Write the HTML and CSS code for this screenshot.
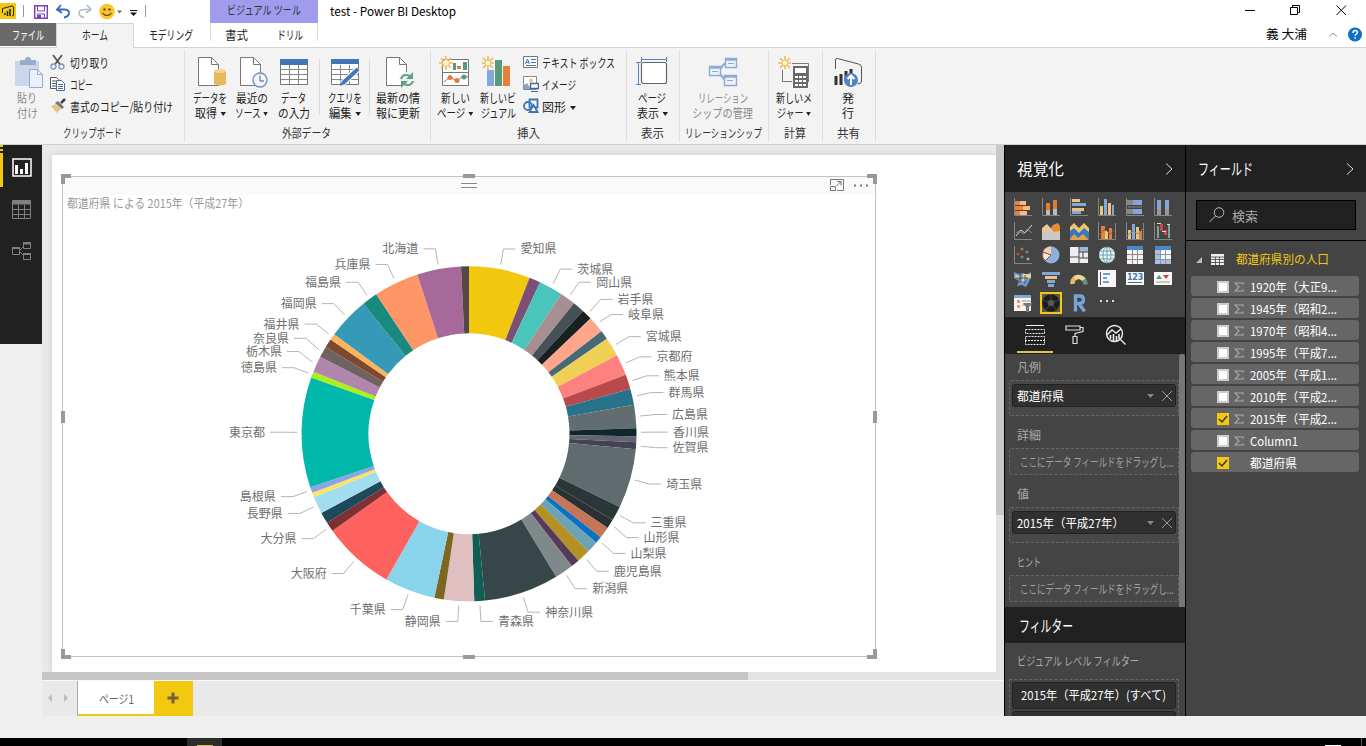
FILE: index.html
```html
<!DOCTYPE html>
<html lang="ja">
<head>
  <meta charset="UTF-8" />
  <title>test - Power BI Desktop</title>
  <link rel="stylesheet" href="styles.css">
</head>
<body>
  <div class="titlebar">
    <svg class="quick" width="150" height="23" viewBox="0 0 150 23" fill="none">
      <rect x="0" y="3" width="16" height="16" fill="#f2c811"/>
      <path d="M2.500 13V8.500L12 6q1.500 0 1.500 1.500V15q0 1-1.500 1" stroke="#222"/>
      <path d="M5 13v2M7.500 11v5M10 9v7" stroke="#222" stroke-width="1.500"/>
      <path d="M23.500 5v12M145.500 5v12" stroke="#999"/>
      <path d="M34.700 5.700h12.600v12.600H34.700z" stroke="#7a43b6" stroke-width="1.500"/>
      <path d="M37.500 6v5h7V6M37.500 18v-4h7v4" stroke="#7a43b6"/>
      <path d="M38 15h3v3h-3z" fill="#7a43b6"/>
      <path d="M61 5l-4 4.500 5 3.500M57.500 9.500h7q5 .5 4.500 4-.5 3-5 4" stroke="#2f6db5" stroke-width="1.800"/>
      <path d="M87 5l4 4.500-5 3.500M90.500 9.500h-7q-5 .5-4.500 4 .5 3 5 4" stroke="#a9bdd3" stroke-width="1.600"/>
      <circle cx="107" cy="11.500" r="7.800" fill="#f9c62b"/>
      <circle cx="104.500" cy="9.500" r="1.200" fill="#754c10"/><circle cx="109.500" cy="9.500" r="1.200" fill="#754c10"/>
      <path d="M102.500 13q4.500 5 9 0" stroke="#754c10" stroke-width="1.200"/>
      <path d="M117 10.500h5l-2.500 3z" fill="#666"/>
      <path d="M130 10.500h7" stroke="#111"/><path d="M130 12.500h7l-3.500 3.500z" fill="#111"/>
    </svg>
    <div class="context-title"><span data-w="74">ビジュアル ツール</span></div>
    <div class="doc-title"><span data-w="126">test - Power BI Desktop</span></div>
    <svg class="winbtns" width="121" height="22" viewBox="1245 0 121 22" fill="none" stroke="#000">
      <path d="M1245 10.500h10M1290.500 7.500h7v7h-7zM1292.500 7V5.500h7v7H1298M1336.500 5.500l9.500 9.500M1346 5.500l-9.500 9.500"/>
    </svg>
  </div>
  <div class="tabs">
    <div class="tab file"><span data-w="32">ファイル</span></div>
    <div class="tab home"><span data-w="26">ホーム</span></div>
    <div class="tab modeling"><span data-w="44">モデリング</span></div>
    <div class="context-tabs">
      <span data-w="23">書式</span><span data-w="26">ドリル</span>
    </div>
    <div class="user"><span data-w="41">義 大浦</span></div>
    <svg class="help" width="38" height="16" viewBox="1328 26 38 16">
      <path d="M1329 36.500l4-3.500 4 3.500" fill="none" stroke="#999"/>
      <circle cx="1355" cy="34.500" r="7" fill="#0f6fc6"/>
      <path d="M1353 33q0-2.500 2.200-2.500t2.200 2q0 1-1.200 1.600-1 .5-1 1.700M1355.100 37.200v1.500" fill="none" stroke="#fff" stroke-width="1.500"/>
    </svg>
  </div>

  <div class="ribbon">
    <div class="group g-clip">
      <div class="tools">
        <div class="big off b-paste">
          <svg width="32" height="32" fill="none"><path d="M2 5h24v25H2z" fill="#cbd6ea"/><path d="M7 9V4h5q0-3 3-3t3 3h5v5z" fill="#9aacc6"/><path d="M16.500 13.500h8l5 5v13h-13z" fill="#eaf0fa" stroke="#94acd4"/><path d="M24.500 13.500v5h5" stroke="#94acd4"/></svg>
          <span data-w="20">貼り</span><span data-w="21">付け</span>
        </div>
        <div class="rows">
          <div class="row"><svg width="16" height="16" fill="none"><path d="M3 1l7.500 10M12 1L4.500 11" stroke="#555" stroke-width="1.800"/><circle cx="3.500" cy="12.500" r="2.500" stroke="#7b9ab8" stroke-width="1.300"/><circle cx="11.500" cy="12.500" r="2.500" stroke="#7b9ab8" stroke-width="1.300"/></svg><span data-w="39">切り取り</span></div>
          <div class="row"><svg width="16" height="16" fill="#fff" stroke="#555"><path d="M.5 1.500h6l2 2v9h-8z"/><path d="M2 5h4M2 7.500h4M2 10h4" /><path d="M6.500 4.500h5l3 3v7h-8z" stroke="#4a6d95"/><path d="M8 8.500h5M8 10.500h5M8 12.500h5" stroke="#4a6d95"/></svg><span data-w="23">コピー</span></div>
          <div class="row"><svg width="16" height="16"><path d="M1 8l5-2 5 5-4 4z" fill="#eac282"/><path d="M5 5l3-2 6 6-2 2z" fill="#777"/><path d="M11 5l4-4" stroke="#444" stroke-width="2.500"/></svg><span data-w="103">書式のコピー/貼り付け</span></div>
        </div>
      </div>
      <div class="caption"><span data-w="59">クリップボード</span></div>
    </div>
    <div class="group g-data">
      <div class="tools">
        <div class="big b-42">
          <svg width="32" height="32" fill="none"><path d="M4.500 1.500h13l7 7v21h-20z" fill="#fff" stroke="#777"/><path d="M17.500 1.500v7h7" stroke="#777"/><path d="M20 15v13q6 3 12 0V15z" fill="#e8b85f"/><ellipse cx="26" cy="15" rx="6" ry="2" fill="#f5d590"/></svg>
          <span data-w="34">データを</span><span data-w="31">取得<i></i></span>
        </div>
        <div class="big b-41">
          <svg width="32" height="32" fill="none"><path d="M4.500 1.500h13l7 7v21h-20z" fill="#fff" stroke="#777"/><path d="M17.500 1.500v7h7" stroke="#777"/><circle cx="24" cy="24" r="7" fill="#f0f5fc" stroke="#6f91bd" stroke-width="1.400"/><path d="M24 19.500V25h4" stroke="#557"/></svg>
          <span data-w="32">最近の</span><span data-w="33">ソース<i></i></span>
        </div>
        <div class="big b-43">
          <svg width="32" height="32" fill="none"><path d="M2.500 3.500h27v25h-27z" fill="#fff" stroke="#777"/><path d="M2 3h28v6H2z" fill="#4076b6"/><path d="M3 13.500h26M3 18.500h26M3 23.500h26M11.500 9v19M20.500 9v19" stroke="#888"/></svg>
          <span data-w="25">データ</span><span data-w="32">の入力</span>
        </div>
        <div class="sep"></div>
        <div class="big b-48">
          <svg width="32" height="32" fill="none"><path d="M2.500 3.500h27v25h-27z" fill="#fff" stroke="#777"/><path d="M2 3h28v5H2z" fill="#4076b6"/><path d="M3 13.500h26M3 18.500h26M3 23.500h26M11.500 9v19M20.500 9v19" stroke="#888"/><path d="M13 28L29 13" stroke="#fff" stroke-width="6"/><path d="M14 27L29 13" stroke="#4479b8" stroke-width="4"/><path d="M11 30l2-5 3 3z" fill="#4479b8"/></svg>
          <span data-w="34">クエリを</span><span data-w="32">編集<i></i></span>
        </div>
        <div class="sep"></div>
        <div class="big b-56">
          <svg width="32" height="32" fill="none"><path d="M4.500 1.500h13l7 7v21h-20z" fill="#fff" stroke="#777"/><path d="M17.500 1.500v7h7" stroke="#777"/><circle cx="25" cy="24" r="8" fill="#f3f3f3"/><path d="M19 23q2-6 9-3l2 2M31 25q-2 6-9 3l-2-2" stroke="#62a088" stroke-width="2.200"/><path d="M31 16v7h-7zM19 32v-7h7z" fill="#62a088"/></svg>
          <span data-w="44">最新の情</span><span data-w="44">報に更新</span>
        </div>
      </div>
      <div class="caption"><span data-w="49">外部データ</span></div>
    </div>
    <div class="group g-insert">
      <div class="tools">
        <div class="big b-44">
          <svg width="32" height="32" fill="none"><path d="M3.500 3.500h26v26h-26z" fill="#fff" stroke="#777"/><path d="M3 16.500h27" stroke="#777"/><path d="M18 13v-3h4v3z" fill="#e27d38"/><path d="M14 7h3v7h-3zM24 6h4v8h-4z" fill="#579b7d"/><path d="M5 26l6-5 7 4 6-5 5 1" stroke="#777"/><circle cx="11" cy="21.500" r="2.500" fill="#e27d38"/><circle cx="18" cy="24.500" r="2.500" fill="#e27d38"/><circle cx="25" cy="21" r="2.500" fill="#579b7d"/><path d="M7 0v14M0 7h14M2 2l10 10M12 2L2 12" stroke="#efb95c" stroke-width="1.600"/><circle cx="7" cy="7" r="3.500" fill="#fff4d8" stroke="#efb95c"/></svg>
          <span data-w="29">新しい</span><span data-w="36">ページ<i></i></span>
        </div>
        <div class="big b-42">
          <svg width="32" height="32" fill="none"><path d="M5 14h7v16H5z" fill="#82a9dc"/><path d="M13 4h7v26h-7z" fill="#579b7d"/><path d="M21 10h7v20h-7z" fill="#e68038"/><path d="M6 0v14M0 7h12M1 2l10 10M11 2L1 12" stroke="#efb95c" stroke-width="1.600"/><circle cx="6" cy="7" r="3" fill="#fff4d8" stroke="#efb95c"/></svg>
          <span data-w="36">新しいビ</span><span data-w="35">ジュアル</span>
        </div>
        <div class="rows">
          <div class="row"><svg width="16" height="16" fill="none"><path d="M.5 2.500h14v11H.5z" fill="#fff" stroke="#777"/><path d="M2.500 10l2-5 2 5M3 8.500h3M8 5.500h5M8 8.500h5M3 11.500h10" stroke="#4176b5"/></svg><span data-w="73">テキスト ボックス</span></div>
          <div class="row"><svg width="16" height="16" fill="none"><path d="M.5.500h13v13H.5z" fill="#fff" stroke="#888"/><circle cx="8" cy="4.500" r="2" fill="#eac57f"/><path d="M1 13V9l3-2 4 6z" fill="#8fa4c0"/><path d="M7.500 7.500h8v5h-8z" fill="#fff" stroke="#3b6aa6" stroke-width="1.400"/><path d="M8 15.500h7" stroke="#3b6aa6"/></svg><span data-w="34">イメージ</span></div>
          <div class="row"><svg width="16" height="16" fill="none" stroke="#3f74b6" stroke-width="1.800"><circle cx="5" cy="8" r="4"/><path d="M6.500 1.500h8v8h-8z"/><path d="M10.500 7l4 7h-8z" fill="#fff"/></svg><span data-w="34">図形<i></i></span></div>
        </div>
      </div>
      <div class="caption"><span data-w="23">挿入</span></div>
    </div>
    <div class="group g-52">
      <div class="tools">
        <div class="big b-full">
          <svg width="32" height="32" fill="none"><rect x="5.500" y="6.500" width="25" height="21" rx="2" fill="#fff" stroke="#666" stroke-width="1.200"/><path d="M5 3.500h26M5.500 1v5M30.500 1v5M2.500 7v21M0 6.500h5M0 28.500h5" stroke="#5686bd"/></svg>
          <span data-w="28">ページ</span><span data-w="31">表示<i></i></span>
        </div>
      </div>
      <div class="caption"><span data-w="23">表示</span></div>
    </div>
    <div class="group g-88">
      <div class="tools">
        <div class="big off b-full">
          <svg width="32" height="32" fill="#eef3fb" stroke="#8eaad4"><path d="M13 13l5-6M13 18l5 6" stroke-width="2"/><path d="M2.500 10.500h11v9h-11zM18.500 2.500h11v9h-11zM17.500 19.500h12v10h-12z" stroke-width="1.400"/><path d="M2 11.500h12M18 3.500h12M17 20.500h13" stroke-width="2.500"/><path d="M5 15.500h6M21 7.500h6M20 24.500h6" /></svg>
          <span data-w="50">リレーション</span><span data-w="61">シップの管理</span>
        </div>
      </div>
      <div class="caption"><span data-w="77">リレーションシップ</span></div>
    </div>
    <div class="group g-53">
      <div class="tools">
        <div class="big b-full">
          <svg width="32" height="32" fill="none"><path d="M4.500 14v11.500H14M14 7.500h16.500V26" stroke="#777"/><path d="M15 10h15v22H15z" fill="#696969"/><path d="M17 12h11v5H17z" fill="#fff"/><path d="M17 20h3v2h-3zM21 20h3v2h-3zM25 20h3v2h-3zM17 24h3v2h-3zM21 24h3v2h-3zM25 24h3v2h-3zM17 28h3v2h-3zM21 28h3v2h-3zM25 28h3v2h-3z" fill="#fff"/><path d="M7 0v13M0 7h13M2 2l10 10M12 2L2 12" stroke="#efb95c" stroke-width="1.600"/><circle cx="7" cy="7" r="3" fill="#fff4d8" stroke="#efb95c"/></svg>
          <span data-w="36">新しいメ</span><span data-w="34">ジャー<i></i></span>
        </div>
      </div>
      <div class="caption"><span data-w="22">計算</span></div>
    </div>
    <div class="group g-52">
      <div class="tools">
        <div class="big b-full">
          <svg width="32" height="32" fill="none"><path d="M3.500 13V4q0-2 2-1.500l21 5.500q3 1 3 3v14q0 3-4 3" stroke="#555"/><path d="M4 20v9M9 18v11M14 15v10M19 13v5" stroke="#333" stroke-width="3"/><circle cx="19" cy="24" r="7" fill="#4c83c3"/><path d="M19 29v-9M15.500 23l3.500-3.500 3.500 3.500" stroke="#fff" stroke-width="2"/></svg>
          <span>発</span><span>行</span>
        </div>
      </div>
      <div class="caption"><span data-w="23">共有</span></div>
    </div>
  </div>

  <div class="workspace">
    <div class="views">
      <div class="view active"><svg width="20" height="19" fill="none"><path d="M1 1h18v17H1z" stroke="#fff" stroke-width="1.500"/><path d="M4.500 7v9M9.500 11v5M14.500 5v11" stroke="#fff" stroke-width="3"/></svg></div>
      <div class="view"><svg width="20" height="20" fill="none" stroke="#808080"><path d="M.5.500h18v18H.5z"/><path d="M1 2.500h18" stroke-width="4"/><path d="M1 9.500h18M1 14.500h18M6.500 5v14M12.500 5v14"/></svg></div>
      <div class="view"><svg width="20" height="18" fill="none" stroke="#808080"><path d="M.5 5.500h7v7h-7zM11.500.500h7v6h-7zM11.500 11.500h7v6h-7zM8 8l4-4M8 10l4 4"/><path d="M0 6h8M11 1.500h8M11 12h8" stroke-width="2"/></svg></div>
    </div>

    <div class="report">
      <div class="canvas">
        <div class="page">
          <div class="visual">
            <div class="visual-head">
              <svg width="40" height="18" viewBox="0 0 40 18" fill="none" stroke="#777"><path d="M.5 8V2.500h13v11H7M.5 9.500h5v4h-5zM6.500 9l4-4M7 4.500h4v4"/><path d="M24 8.500h2M30 8.500h2M36 8.500h2" stroke-width="2"/></svg>
            </div>
            <div class="visual-title"><span data-w="182">都道府県 による 2015年（平成27年）</span></div>
            <svg id="donut" width="812" height="441" viewBox="63 215 812 441"></svg>
            <b class="h tl"></b><b class="h tr"></b><b class="h bl"></b><b class="h br"></b>
            <b class="h tm"></b><b class="h bm"></b><b class="h lm"></b><b class="h rm"></b>
            <b class="grip"></b>
          </div>
        </div>
        <div class="vscroll"><div></div></div>
      </div>
      <div class="hscroll"><div></div></div>
      <div class="pagetabs">
        <div class="arrows"><svg width="20" height="8" fill="#bbb"><path d="M4 0v8L0 4zM16 0v8l4-4z"/></svg></div>
        <div class="pagetab"><span data-w="35">ページ1</span></div>
        <div class="addtab"><svg width="12" height="12"><path d="M6 .5v11M.5 6h11" stroke="#71643c" stroke-width="3"/></svg></div>
      </div>
    </div>

    <div class="pane">
      <div class="pane-head"><span data-w="47">視覚化</span><svg width="8" height="12"><path d="M1 .5l6 5.500-6 5.500" fill="none" stroke="#ddd"/></svg></div>
      <div class="viz-grid" id="viz">
        <svg><path d="M1 3h5v4H1zM1 8h8v4H1zM1 13h5v4H1z" fill="#e8823a"/><path d="M6 3h6v4H6zM9 8h7v4H9zM6 13h7v4H6z" fill="#f6bb83"/><path class="ax" d="M.5 0v17.500H18"/></svg>
        <svg><path d="M4 5h4v7H4zM11 2h4v9h-4z" fill="#e07b32"/><path d="M4 12h4v5H4zM11 11h4v6h-4z" fill="#bbb"/><path class="ax" d="M.5 0v17.500H18"/></svg>
        <svg><path d="M2 1h8v3H2zM2 10h12v3H2z" fill="#edc47d"/><path d="M2 5h14v3H2zM2 13h9v3H2z" fill="#82a7d8"/><path class="ax" d="M.5 0v17.500H18"/></svg>
        <svg><path d="M2 8h3v9H2zM10 5h3v12h-3z" fill="#edc47d"/><path d="M6 1h3v16H6zM14 7h2v10h-2z" fill="#82a7d8"/><path class="ax" d="M.5 0v17.500H18"/></svg>
        <svg><path d="M1 2h6v5H1zM1 11h6v5H1z" fill="#888"/><path d="M7 2h9v5H7zM7 11h9v5H7z" fill="#82a7d8"/><path class="ax" d="M.5 0v17.500H18M2 9h14"/></svg>
        <svg><path d="M3 2h4v9H3zM11 2h4v9h-4z" fill="#82a7d8"/><path d="M3 11h4v6H3zM11 11h4v6h-4z" fill="#999"/><path class="ax" d="M.5 0v17.500H18"/></svg>

        <svg><path class="ax" d="M.5 0v17.500H18"/><path d="M2 14l5-6 4 3 7-8" fill="none" stroke="#ddd"/><path d="M2 11l3-2 5 3 3-5 5 4" fill="none" stroke="#888"/></svg>
        <svg><path d="M8 7l3-4 5-2 2 3v10H8z" fill="#e58c3e"/><path d="M0 6l5-4 7 8 6-1v8H0z" fill="#ecc98f"/><path d="M0 12l6-4 12 4v6H0z" fill="#c8c8c8"/></svg>
        <svg><path d="M0 5l4-4 5 5 5-5 5 5v12H0z" fill="#f0c674"/><path d="M0 9l4-3 5 5 5-5 5 4v8H0z" fill="#3a78bd"/><path d="M0 17l4-5 4 4 5-4 5 5v1H0z" fill="#e5a04c"/></svg>
        <svg><path d="M3 4h4v13H3zM11 6h3v11h-3z" fill="#e5803b"/><path d="M7 9h3v8H7z" fill="#edc47d"/><path class="ax" d="M.5 0v17.500H17.500V1"/><path d="M1 13l6-6 5 5 5-4" fill="none" stroke="#a45"/></svg>
        <svg><path d="M2 8h3v9H2zM10 5h3v12h-3z" fill="#edc47d"/><path d="M6 2h3v15H6z" fill="#82a7d8"/><path d="M13 9h3v8h-3z" fill="#e5803b"/><path class="ax" d="M.5 0v17.500H17.500V1"/><path d="M1 14l6-5 5 3 5-5" fill="none" stroke="#888"/></svg>
        <svg><path class="ax" d="M.5 0v17.500H18"/><path d="M4 4v12M15 2v14" stroke="#75a995" stroke-width="2"/><path d="M7.500 2v7M11.500 8v5" stroke="#d4444a" stroke-width="3"/><path d="M3 1.500h4M8 9.500h4M13 2.500h3" stroke="#ddd"/></svg>

        <svg><path class="ax" d="M.5 0v17.500H18"/><circle cx="8" cy="3" r="1.500" fill="#bb7654"/><circle cx="4" cy="8" r="1.500" fill="#bb4a3b"/><circle cx="13" cy="6" r="1.500" fill="#6b88aa"/><circle cx="8" cy="11" r="1.500" fill="#5a9a80"/><circle cx="14" cy="13" r="1.500" fill="#8ba"/></svg>
        <svg><circle cx="9" cy="9" r="8.500" fill="#8db0dc"/><path d="M9 9V.500A8.500 8.500 0 0 0 1 6z" fill="#f0d2ae"/><path d="M9 9L1 6a8.500 8.500 0 0 0 2 9z" fill="#f5ebe4" stroke="#8a4a35"/></svg>
        <svg><path d="M0 1h18v16H0z" fill="#eee"/><path d="M9 1h9v5H9z" fill="#9db9dd"/><path d="M9 1v16M0 11h9M9 6h9M13 6v6M9 12h9" fill="none" stroke="#444"/></svg>
        <svg><circle cx="9" cy="9" r="8" fill="#ebf6f8"/><ellipse cx="9" cy="9" rx="4" ry="8" class="globe"/><path class="globe" d="M9 1v16M1 9h16M2.500 5h13M2.500 13h13"/></svg>
        <svg><path d="M1 0h16v18H1z" fill="#f6f3ef"/><path d="M1 0h16v4H1z" fill="#4a86c9"/><path d="M1 8.500h16M1 13.500h16M6.500 4v14M11.500 4v14" stroke="#988"/></svg>
        <svg><path d="M1 0h16v18H1z" fill="#f6f6f6"/><path d="M1 4h5v14H1zM6 13h11v5H6z" fill="#a7c1df"/><path d="M1 0h16v4H1z" fill="#4a86c9"/><path d="M1 8.500h16M1 13.500h16M6.500 4v14M11.500 4v14" stroke="#89a"/></svg>

        <svg><path d="M0 2l5 2 5-1 2 2 5-3v6l-5 9-4-2-5 1 2-5-5-3z" fill="#719bc7"/><path d="M9 4h8v4h-5l-1 3H8zM1 5l5 1v2H2z" fill="#ead29f"/><path d="M6 4v9M2 8h12M11 5v9" stroke="#333" stroke-width=".7"/></svg>
        <svg><path d="M0 2h18v3H0zM6 14h6v3H6z" fill="#82a7d8"/><path d="M3 6h12v3H3z" fill="#edc47d"/><path d="M5 10h8v3H5z" fill="#82a7d8"/></svg>
        <svg fill="none" stroke-width="4.500"><path d="M2.500 14A6.500 6.500 0 0 1 6 7.500" stroke="#e2bd66"/><path d="M5 8a6.500 6.500 0 0 1 9 2" stroke="#f0d59b"/><path d="M14 9.500q1.500 2 1.500 5" stroke="#6b9581"/></svg>
        <svg><path d="M0 0h18v17H0z" fill="#f7f7f7"/><path d="M2.500 2v13" stroke="#555"/><path d="M5 4h7M5 8h4M5 12h6" stroke="#729dcc" stroke-width="2"/></svg>
        <svg><path d="M0 2h18v13H0z" fill="#f7f7f7"/><path d="M2 12.500h14" stroke="#666"/><text x="1" y="10">123</text></svg>
        <svg><path d="M0 2h18v13H0z" fill="#f7f7f7"/><path d="M2 9l3-4 3 4z" fill="#519b7d"/><path d="M9 5h6l-3 4z" fill="#c74444"/><path d="M2 12h14" stroke="#999"/></svg>

        <svg><path d="M0 1h17v16H0z" fill="#f7f4f2"/><path d="M0 1h17v3H0z" fill="#80a8d7"/><path d="M3 6h3v3H3zM3 11h3v3H3z" fill="#e49966"/><path d="M8 7h9M8 11h3" stroke="#999"/><path d="M9 9h10l-4 4v5h-3v-5z" fill="#777"/></svg>
        <svg class="picked"><circle cx="9" cy="9" r="6" fill="none" stroke="#1d1d1d" stroke-width="5.500"/><path d="M9 0v6M17 6l-5 2M14 16l-3-4M4 16l3-4M1 6l5 2" stroke="#4a4a4a" stroke-width=".8"/></svg>
        <svg><path d="M5.500 17.500V2h4q4 0 4 3.700t-4 3.700h-4M9 9.500l5.500 8" fill="none" stroke="#77a3d6" stroke-width="3.400"/></svg>
        <svg><path d="M2 7h2M8 7h2M14 7h2" stroke="#ddd" stroke-width="2"/></svg>
      </div>
      <div class="modes">
        <div class="mode on"><svg width="22" height="22" fill="none" stroke="#eee"><path d="M2 1.500h18"/><path d="M1.500 5.500h19v4h-19zM1.500 12.500h19v8h-19zM1 16.500h20" stroke-dasharray="2 1"/></svg></div>
        <div class="mode"><svg width="20" height="22" fill="none" stroke="#ddd" stroke-width="1.200"><path d="M1 2h14v4H1zM15 3.500h3v4l-8 2v3M8 12.500h4v7H8z"/></svg></div>
        <div class="mode"><svg width="22" height="22" fill="none" stroke="#eee" stroke-width="1.400"><circle cx="9.500" cy="9.500" r="8"/><path d="M15.500 15.500l5 5M2 11l5-5 4 3 5-4"/><path d="M5.500 11v4M8.500 10v7M11.500 12v5M14 10v5" stroke-width="1.600"/></svg></div>
      </div>
      <div class="wells">
        <div class="well-list">
          <div class="label">凡例</div>
          <div class="drop filled"><div class="chip"><span data-w="47">都道府県</span><svg width="28" height="12"><path d="M1 4h7L4.500 8z" fill="#888"/><path d="M16 1l10 10M26 1L16 11" stroke="#999"/></svg></div></div>
          <div class="label">詳細</div>
          <div class="drop"><span data-w="154">ここにデータ フィールドをドラッグし...</span></div>
          <div class="label">値</div>
          <div class="drop filled"><div class="chip"><span data-w="107">2015年（平成27年）</span><svg width="28" height="12"><path d="M1 4h7L4.500 8z" fill="#888"/><path d="M16 1l10 10M26 1L16 11" stroke="#999"/></svg></div></div>
          <div class="label"><span data-w="24">ヒント</span></div>
          <div class="drop"><span data-w="154">ここにデータ フィールドをドラッグし...</span></div>
        </div>
        <div class="well-scroll"></div>
      </div>
      <div class="filter-head"><span data-w="54">フィルター</span></div>
      <div class="filters">
        <div class="label"><span data-w="122">ビジュアル レベル フィルター</span></div>
        <div class="filter-drop">
          <div class="chip"><span data-w="145">2015年（平成27年）(すべて)</span></div>
          <div class="chip"></div>
        </div>
      </div>
    </div>

    <div class="pane fields">
      <div class="pane-head"><span data-w="55">フィールド</span><svg width="8" height="12"><path d="M1 .5l6 5.500-6 5.500" fill="none" stroke="#ddd"/></svg></div>
      <div class="search-area">
        <div class="search"><svg width="16" height="16" fill="none" stroke="#bbb"><circle cx="10" cy="5.500" r="4.800"/><path d="M6.500 9L.500 15"/></svg><span data-w="26">検索</span></div>
      </div>
      <div class="table-row">
        <svg width="6" height="6"><path d="M6 0v6H0z" fill="#bbb"/></svg>
        <svg class="tbl" width="13" height="11"><path d="M0 0h13v11H0z" fill="#eee"/><path d="M0 3h13M0 5.500h13M0 8.500h13M4.500 3v8M8.500 3v8" stroke="#444" stroke-width=".8"/></svg>
        <span data-w="93">都道府県別の人口</span>
      </div>
      <div id="fields"></div>
    </div>
  </div>
  <div class="statusbar"></div>
  <div class="taskbar"><div class="tile"></div><div class="tray"></div></div>
  <script src="script.js"></script>
</body>
</html>
```

FILE: styles.css
```css
* {
  box-sizing: border-box;
}

body {
  margin: 0;
  width: 1366px;
  height: 746px;
  overflow: hidden;
  background: #efefef;
  color: #222;
  font-family: "Noto Sans CJK JP", sans-serif;
  font-size: 12px;
  line-height: 15px;
}

svg {
  display: block;
  flex: none;
}

span {
  display: inline-block;
  white-space: nowrap;
  transform-origin: left center;
}

/* title bar and tabs */
.titlebar {
  height: 23px;
  background: #fff;
  display: flex;
}

.context-title {
  width: 108px;
  margin-left: 60px;
  background: #9f9cee;
  text-align: center;
  padding-top: 2px;
  color: #333;
}

.doc-title {
  margin-left: 12px;
  padding-top: 3px;
  color: #000;
}

.winbtns {
  margin-left: auto;
}

.tabs {
  height: 24px;
  background: #fff;
  display: flex;
}

.tab {
  text-align: center;
  padding-top: 4px;
}

.tab.file {
  width: 56px;
  height: 23px;
  background: #6a6a6a;
  color: #fff;
}

.tab.home {
  width: 78px;
  height: 25px;
  background: #f3f3f3;
  border: 1px solid #d4d4d4;
  border-bottom: 0;
  padding-top: 3px;
  z-index: 1;
}

.tab.modeling {
  width: 76px;
}

.modeling span {
  margin-left: -2px;
}

.context-tabs {
  width: 108px;
  height: 18px;
  padding: 4px 14px 0 14px;
  border-left: 1px solid #dcdcec;
  border-right: 1px solid #dcdcec;
  display: flex;
  justify-content: space-between;
}

.user {
  margin-left: 948px;
  padding-top: 3px;
  color: #000;
}

.help {
  margin: 3px 0 0 auto;
}

/* ribbon */
.ribbon {
  height: 98px;
  background: #f3f3f3;
  border-top: 1px solid #d4d4d4;
  border-bottom: 1px solid #d0d0d0;
  display: flex;
  padding-top: 2px;
}

.group {
  height: 92px;
  border-right: 1px solid #dedede;
  display: flex;
  flex-direction: column;
}

.g-clip { width: 185px; }
.g-data { width: 246px; }
.g-insert { width: 196px; }
.g-52 { width: 53px; }
.g-88 { width: 89px; }
.g-53 { width: 54px; }

.tools {
  display: flex;
  height: 75px;
}

.g-data .tools { padding-left: 4px; }
.g-insert .tools { padding-left: 2px; }
.g-52 .tools { padding-right: 2px; }
.g-88 .tools { padding-right: 3px; }
.g-53 .tools { padding-right: 4px; }

.caption {
  text-align: center;
  color: #333;
}

.g-data .caption,
.g-88 .caption,
.g-53 .caption,
.g-52 .caption {
  padding-right: 2px;
}

.big {
  display: flex;
  flex-direction: column;
  align-items: center;
  padding-top: 6px;
}

.big svg {
  margin-bottom: 2px;
}

.off { color: #8a8a8a; }

.b-paste { width: 42px; margin: 0 2px 0 6px; }
.b-paste svg { margin-left: 3px; }
.b-41 { width: 41px; }
.b-42 { width: 42px; }
.b-43 { width: 43px; margin-right: 4px; }
.b-44 { width: 44px; }
.b-48 { width: 49px; }
.b-56 { width: 56px; }
.b-full { width: 100%; }

.big i,
.row i {
  display: inline-block;
  border: 3px solid transparent;
  border-top: 4px solid #222;
  border-bottom: 0;
  margin-left: 4px;
  vertical-align: 2px;
}

.sep {
  width: 1px;
  height: 56px;
  margin-top: 9px;
  background: #d8d8d8;
}

.row {
  height: 22px;
  display: flex;
  align-items: center;
  gap: 4px;
}

.rows { padding-top: 1px; }
.g-insert .rows { margin-left: 4px; }
.g-insert .row { gap: 3px; }

/* workspace */
.workspace {
  height: 571px;
  display: flex;
}

.views {
  width: 42px;
  height: 199px;
  background: #212121;
}

.view {
  height: 42px;
  padding: 13px 0 0 12px;
}

.view.active {
  background: linear-gradient(#f2c811 2px, #212121 2px, #212121 4px, #f2c811 4px, #f2c811 6px, #212121 6px, #212121 8px, #f2c811 8px) 0 0 / 3px 42px no-repeat;
}

.report {
  width: 962px;
  background: #e9e9e9;
}

.canvas {
  height: 527px;
  display: flex;
}

.page {
  width: 944px;
  height: 517px;
  margin: 10px 0 0 10px;
  padding: 21px 0 0 10px;
  background: #fff;
  box-shadow: 0 0 7px #ccc;
}

.visual {
  position: relative;
  width: 814px;
  height: 481px;
  border: 1px solid #c3c3c3;
}

.visual-head {
  height: 18px;
  background: #fafafa;
}

.visual-head svg {
  margin-left: 767px;
}

.visual-title {
  height: 20px;
  padding-left: 4px;
  color: #999;
}

.h {
  position: absolute;
  border: 0 solid #999;
  width: 10px;
  height: 10px;
}

.tl { left: -2px; top: -3px; border-width: 4px 0 0 4px; }
.tr { right: -2px; top: -3px; border-width: 4px 4px 0 0; }
.bl { left: -2px; bottom: -3px; border-width: 0 0 4px 4px; }
.br { right: -2px; bottom: -3px; border-width: 0 4px 4px 0; }
.tm { left: 400px; top: -3px; width: 12px; height: 4px; background: #999; }
.bm { left: 400px; bottom: -3px; width: 12px; height: 4px; background: #999; }
.lm { left: -2px; top: 234px; width: 4px; height: 12px; background: #999; }
.rm { right: -2px; top: 234px; width: 4px; height: 12px; background: #999; }

.grip {
  position: absolute;
  left: 398px;
  top: 6px;
  width: 16px;
  height: 5px;
  border: 1px solid #888;
  border-width: 1px 0;
}

#donut text {
  fill: #707070;
  font-size: 12px;
}

#donut polyline {
  fill: none;
  stroke: #b5b5b5;
}

.vscroll {
  width: 8px;
  background: #e3e3e3;
  z-index: 1;
}

.vscroll div {
  height: 370px;
  background: #c8c8c8;
}

.hscroll {
  height: 9px;
  border-bottom: 1px solid #f8f8f8;
  background: #e3e3e3;
  position: relative;
}

.hscroll div {
  width: 706px;
  height: 8px;
  background: #c6c6c6;
}

.pagetabs {
  height: 35px;
  display: flex;
}

.arrows {
  width: 36px;
  padding: 13px 0 0 6px;
  border-right: 1px solid #aaa;
}

.pagetab {
  width: 76px;
  background: #fff;
  border-bottom: 2px solid #f2c811;
  text-align: center;
  padding-top: 10px;
  color: #666;
}

.addtab {
  width: 39px;
  background: #f2c811;
  padding: 11px 0 0 13px;
}

/* panes */
.pane {
  width: 181px;
  height: 571px;
  overflow: hidden;
  background: #444;
  border-left: 1px solid #000;
  color: #fff;
}

.pane-head {
  height: 47px;
  background: #212121;
  display: flex;
  align-items: center;
  justify-content: space-between;
  padding: 0 12px;
  font-size: 16px;
}

.viz-grid {
  display: grid;
  grid-template-columns: repeat(6, 28px);
  grid-auto-rows: 24px;
  padding: 6px 0 0 9px;
  height: 125px;
}

.viz-grid svg {
  width: 18px;
  height: 18px;
  overflow: visible;
}

.viz-grid text {
  font: bold 8px "DejaVu Sans", sans-serif;
  letter-spacing: -0.2px;
  fill: #4178b8;
}

.ax,
.globe {
  fill: none;
  stroke: #858585;
}

.globe {
  stroke: #68a5ad;
}

.viz-grid .picked {
  outline: 2px solid #f2c811;
  background: #555;
}

.modes {
  height: 37px;
  background: #212121;
  display: flex;
  gap: 4px;
  padding-left: 12px;
}

.mode {
  width: 36px;
  height: 36px;
  padding: 7px 0 0 8px;
}

.mode.on {
  border-bottom: 2px solid #e3c24c;
  padding-left: 7px;
}

.wells {
  height: 253px;
  display: flex;
}

.well-list {
  width: 174px;
  padding-left: 4px;
}

.well-scroll {
  width: 6px;
  background: #777;
  border-radius: 3px 3px 0 0;
}

.label {
  height: 26px;
  padding: 5px 0 0 8px;
  color: #aaa;
}

.drop + .label {
  height: 32px;
  padding-top: 11px;
}

.drop {
  width: 170px;
  height: 27px;
  border: 1px dashed #666;
  border-radius: 2px;
  padding: 5px 0 0 10px;
  background: #484848;
  color: #a0a0a0;
}

.drop.filled {
  height: 36px;
  padding: 3px 2px;
}

.chip {
  width: 164px;
  height: 23px;
  background: #303030;
  border: 1px solid #222;
  border-radius: 3px;
  display: flex;
  align-items: center;
  justify-content: space-between;
  padding: 0 1px 0 4px;
  color: #fff;
}

.filter-head {
  height: 36px;
  background: #212121;
  padding: 11px 0 0 14px;
  font-size: 16px;
}

.filters {
  padding-left: 4px;
}

.filters .label {
  height: 36px;
  padding-top: 10px;
}

.filter-drop {
  width: 170px;
  height: 60px;
  border: 1px dashed #666;
  padding: 2px;
}

.filter-drop .chip {
  height: 27px;
  margin-bottom: 2px;
  padding: 0 0 2px 8px;
}

.search-area {
  height: 49px;
  border-bottom: 1px solid #000;
  padding: 8px 0 0 10px;
}

.search {
  width: 160px;
  height: 30px;
  border: 1px solid #000;
  background: #212121;
  display: flex;
  align-items: center;
  gap: 7px;
  padding-left: 12px;
  color: #aaa;
  font-size: 13px;
}

.table-row {
  height: 35px;
  padding: 2px 0 0 10px;
  display: flex;
  align-items: center;
  color: #f2c811;
}

.table-row span {
  margin-top: -2px;
}

.table-row .tbl {
  margin: 0 12px 0 9px;
}

.field {
  width: 168px;
  height: 20px;
  margin: 0 0 2px 5px;
  padding-left: 26px;
  background: #666;
  border-radius: 3px;
  display: flex;
  align-items: center;
}

.box {
  width: 12px;
  height: 12px;
  margin-top: 1px;
  background: #fff;
  border: 2px solid #ccc;
  margin-right: 5px;
}

.box.on {
  background: #f2c811;
  border: 0;
}

.sigma {
  width: 16px;
  margin-top: 2px;
}

.statusbar {
  height: 22px;
  background: #efefef;
}

.taskbar {
  height: 8px;
  background: #000;
  display: flex;
  justify-content: space-between;
}

.tile {
  width: 35px;
  height: 8px;
  margin-left: 187px;
  background: linear-gradient(#d9b84a, #d9b84a) 10px 7px / 16px 1px no-repeat #2c2c2c;
}

.tray {
  width: 41px;
  height: 8px;
  border-right: 1px solid #555;
  margin-right: 4px;
  background: linear-gradient(#fff, #fff) 4px 7px / 16px 1px no-repeat;
}
```

FILE: script.js
```javascript
// prefecture, population (thousands), colour, label shown, label shift down
const data = [
  ["愛知県", 7483, "#f2c80f", 1, -1], ["愛媛県", 1385, "#7c4f76", 0], ["茨城県", 2917, "#4ac5bb", 1, -1.5],
  ["岡山県", 1922, "#a68f90", 1, -0.5], ["沖縄県", 1434, "#465156", 0], ["岩手県", 1280, "#18211f", 1, -1.5],
  ["岐阜県", 2032, "#ffa58a", 1, 2.5], ["宮崎県", 1104, "#456a76", 0], ["宮城県", 2334, "#f0cf55", 1],
  ["京都府", 2610, "#fd817e", 1], ["熊本県", 1786, "#b94a4c", 1], ["群馬県", 1973, "#27738b", 1],
  ["広島県", 2844, "#616d6e", 1], ["香川県", 976, "#0f262d", 1], ["高知県", 728, "#62656f", 0],
  ["佐賀県", 833, "#434354", 1, 0.5], ["埼玉県", 7267, "#5f6b6d", 1], ["三重県", 1816, "#2a3637", 1],
  ["山形県", 1124, "#293132", 1, 3], ["山口県", 1405, "#c57659", 0], ["山梨県", 835, "#0d70c0", 1, 1],
  ["滋賀県", 1413, "#6ba2b4", 0], ["鹿児島県", 1648, "#b49127", 1, 1], ["秋田県", 1023, "#57395a", 0],
  ["新潟県", 2304, "#7f898a", 1, 1], ["神奈川県", 9126, "#374649", 1, 1], ["青森県", 1308, "#115e55", 1, 1],
  ["静岡県", 3700, "#dfbfbf", 1, 1], ["石川県", 1154, "#7c6620", 0], ["千葉県", 6223, "#8ad4eb", 1, 1],
  ["大阪府", 8839, "#fd625e", 1, 1], ["大分県", 1166, "#7e3032", 1, 1], ["長崎県", 1377, "#1d4a5a", 0],
  ["長野県", 2099, "#a1ddef", 1], ["鳥取県", 573, "#fee266", 0], ["島根県", 694, "#8aa5e5", 1],
  ["東京都", 13515, "#01b8aa", 1], ["徳島県", 756, "#aaf01a", 1], ["栃木県", 1974, "#b285ac", 1, -4.5],
  ["奈良県", 1364, "#706262", 1, -4], ["富山県", 1066, "#7d482f", 0], ["福井県", 787, "#feb45b", 1, -1.5],
  ["福岡県", 5102, "#3599b8", 1, -1], ["福島県", 1914, "#1a8a7e", 1, -1], ["兵庫県", 5535, "#fe9666", 1, -1],
  ["北海道", 5382, "#a66999", 1, -1], ["和歌山県", 964, "#554747", 0]
];

const cx = 469, cy = 433.8, outer = 167.5, inner = 100.5;

function point(angle, r) {
  return [(cx + r * Math.sin(angle)).toFixed(2), (cy - r * Math.cos(angle)).toFixed(2)];
}

function drawDonut() {
  const total = data.reduce((sum, d) => sum + d[1], 0);
  let start = 0;
  let html = "";
  data.forEach(([name, value, color, shown, shift = 0]) => {
    const end = start + value / total * Math.PI * 2;
    html += `<path fill="${color}" d="M${point(start, outer)}A${outer} ${outer} 0 0 1 ${point(end, outer)}L${point(end, inner)}A${inner} ${inner} 0 0 0 ${point(start, inner)}Z"/>`;
    if (shown) {
      const mid = (start + end) / 2;
      const side = mid < Math.PI ? 1 : -1;
      const x = Number(point(mid, 187)[0]);
      const y = Number(point(mid, 187)[1]) + shift;
      html += `<polyline points="${point(mid, 172)} ${x},${y} ${x + side * 12},${y}"/>`;
      html += `<text x="${x + side * 17}" y="${y + 4.5}" text-anchor="${side > 0 ? "start" : "end"}">${name}</text>`;
    }
    start = end;
  });
  document.getElementById("donut").innerHTML = html;
}

const fields = [
  ["1920年（大正9...", 87], ["1945年（昭和2...", 87], ["1970年（昭和4...", 87],
  ["1995年（平成7...", 87], ["2005年（平成1...", 87], ["2010年（平成2...", 87],
  ["2015年（平成2...", 87, true], ["Column1", 48], ["都道府県", 47, true]
];

function drawFields() {
  document.getElementById("fields").innerHTML = fields.map(([name, w, on]) => `
    <div class="field">
      <div class="box${on ? " on" : ""}">${on ? '<svg width="12" height="12"><path d="M2 6l3 3 5-6" fill="none" stroke="#333" stroke-width="1.500"/></svg>' : ""}</div>
      <div class="sigma">${name === "都道府県" ? "" : '<svg width="10" height="10"><path d="M9 2.500V1H1l4 4-4 4h8V7.500" fill="none" stroke="#aaa" stroke-width="1.200"/></svg>'}</div>
      <span data-w="${w}">${name}</span>
    </div>`).join("");
}

// condense text to the width its label is given
function fitText() {
  document.querySelectorAll("[data-w]").forEach((el) => {
    const natural = el.getBoundingClientRect().width;
    const target = Number(el.dataset.w);
    el.style.transform = `scaleX(${target / natural})`;
    el.style.marginRight = `${target - natural}px`;
  });
}

drawDonut();
drawFields();
fitText();
```
